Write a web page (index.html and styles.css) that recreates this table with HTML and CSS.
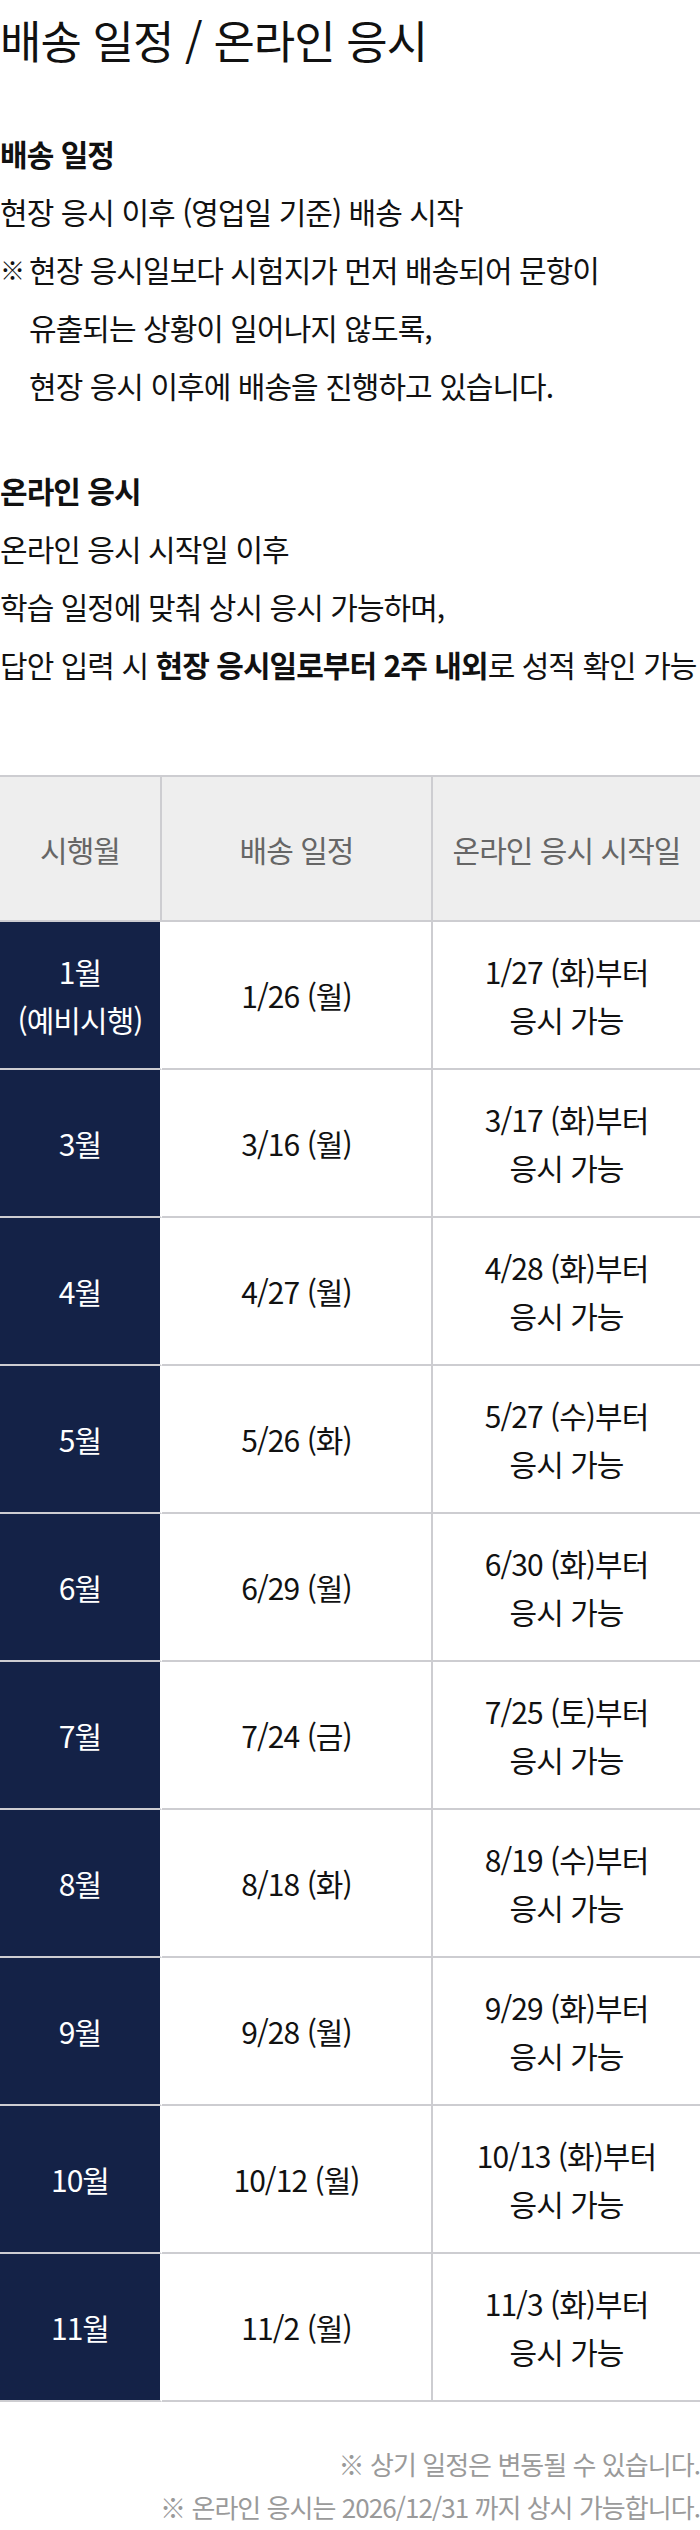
FILE: index.html
```html
<!DOCTYPE html>
<html lang="ko">
<head>
<meta charset="utf-8">
<title>배송 일정 / 온라인 응시</title>
<link rel="stylesheet" href="styles.css">
</head>
<body>
<main class="page">
  <h1 class="title">배송 일정 / 온라인 응시</h1>

  <section class="info info-first">
    <h2 class="info-head">배송 일정</h2>
    <p class="info-line">현장 응시 이후 (영업일 기준) 배송 시작</p>
    <div class="note">
      <span class="note-mark">※</span>
      <p class="note-text">현장 응시일보다 시험지가 먼저 배송되어 문항이<br>유출되는 상황이 일어나지 않도록,<br>현장 응시 이후에 배송을 진행하고 있습니다.</p>
    </div>
  </section>

  <section class="info info-second">
    <h2 class="info-head">온라인 응시</h2>
    <p class="info-line">온라인 응시 시작일 이후</p>
    <p class="info-line">학습 일정에 맞춰 상시 응시 가능하며,</p>
    <p class="info-line">답안 입력 시 <strong>현장 응시일로부터 2주 내외</strong>로 성적 확인 가능</p>
  </section>

  <table class="schedule">
    <thead>
      <tr>
        <th class="h-month">시행월</th>
        <th class="h-ship">배송 일정</th>
        <th class="h-online">온라인 응시 시작일</th>
      </tr>
    </thead>
    <tbody>
      <tr><td class="month">1월<br>(예비시행)</td><td class="ship">1/26 (월)</td><td class="online">1/27 (화)부터<br>응시 가능</td></tr>
      <tr><td class="month">3월</td><td class="ship">3/16 (월)</td><td class="online">3/17 (화)부터<br>응시 가능</td></tr>
      <tr><td class="month">4월</td><td class="ship">4/27 (월)</td><td class="online">4/28 (화)부터<br>응시 가능</td></tr>
      <tr><td class="month">5월</td><td class="ship">5/26 (화)</td><td class="online">5/27 (수)부터<br>응시 가능</td></tr>
      <tr><td class="month">6월</td><td class="ship">6/29 (월)</td><td class="online">6/30 (화)부터<br>응시 가능</td></tr>
      <tr><td class="month">7월</td><td class="ship">7/24 (금)</td><td class="online">7/25 (토)부터<br>응시 가능</td></tr>
      <tr><td class="month">8월</td><td class="ship">8/18 (화)</td><td class="online">8/19 (수)부터<br>응시 가능</td></tr>
      <tr><td class="month">9월</td><td class="ship">9/28 (월)</td><td class="online">9/29 (화)부터<br>응시 가능</td></tr>
      <tr><td class="month">10월</td><td class="ship">10/12 (월)</td><td class="online">10/13 (화)부터<br>응시 가능</td></tr>
      <tr><td class="month">11월</td><td class="ship">11/2 (월)</td><td class="online">11/3 (화)부터<br>응시 가능</td></tr>
    </tbody>
  </table>

  <div class="footnotes">
    <p class="footnote">※ 상기 일정은 변동될 수 있습니다.</p>
    <p class="footnote">※ 온라인 응시는 2026/12/31 까지 상시 가능합니다.</p>
  </div>
</main>
</body>
</html>
```

FILE: styles.css
```css
* {
  box-sizing: border-box;
}

html, body {
  margin: 0;
  padding: 0;
  background: #ffffff;
}

body {
  font-family: "Noto Sans CJK KR", "Noto Sans", sans-serif;
  color: #111111;
  letter-spacing: -0.06em;
}

.page {
  width: 700px;
}

.title {
  margin: 0;
  font-size: 45px;
  font-weight: 400;
  line-height: 80px;
  color: #111111;
}

.info {
  font-size: 30px;
  line-height: 58px;
}

.info-first {
  margin-top: 44px;
}

.info-second {
  margin-top: 47px;
}

.info-head {
  margin: 0;
  font-size: 30px;
  font-weight: 700;
  line-height: 58px;
}

.info-line {
  margin: 0;
  white-space: nowrap;
}

.info-line strong {
  font-weight: 700;
}

.note {
  display: flex;
}

.note-mark {
  flex: 0 0 29px;
  font-size: 25px;
  font-weight: 700;
}

.note-text {
  margin: 0;
  white-space: nowrap;
}

.schedule {
  margin-top: 82px;
  width: 700px;
  table-layout: fixed;
  border-collapse: separate;
  border-spacing: 0;
  font-size: 30px;
  line-height: 48px;
  text-align: center;
}

.schedule th {
  height: 147px;
  background: #eeeeee;
  color: #666666;
  font-weight: 400;
  border-top: 2px solid #cdcdd1;
  border-bottom: 2px solid #cdcdd1;
  padding: 0;
}

.h-month {
  width: 162px;
  border-right: 2px solid #cdcdd1;
}

.h-ship {
  width: 271px;
  border-right: 2px solid #cdcdd1;
}

.schedule td {
  height: 148px;
  padding: 0;
  border-bottom: 2px solid #cdcdd1;
  color: #111111;
}

.schedule td.month {
  background: #142247;
  color: #ffffff;
  border-right: 2px solid #ffffff;
}

.schedule td.ship {
  border-right: 2px solid #cdcdd1;
}

.footnotes {
  margin-top: 40px;
  text-align: right;
  font-size: 26px;
  line-height: 43px;
  color: #9a9a9a;
}

.footnote {
  margin: 0;
}
```
